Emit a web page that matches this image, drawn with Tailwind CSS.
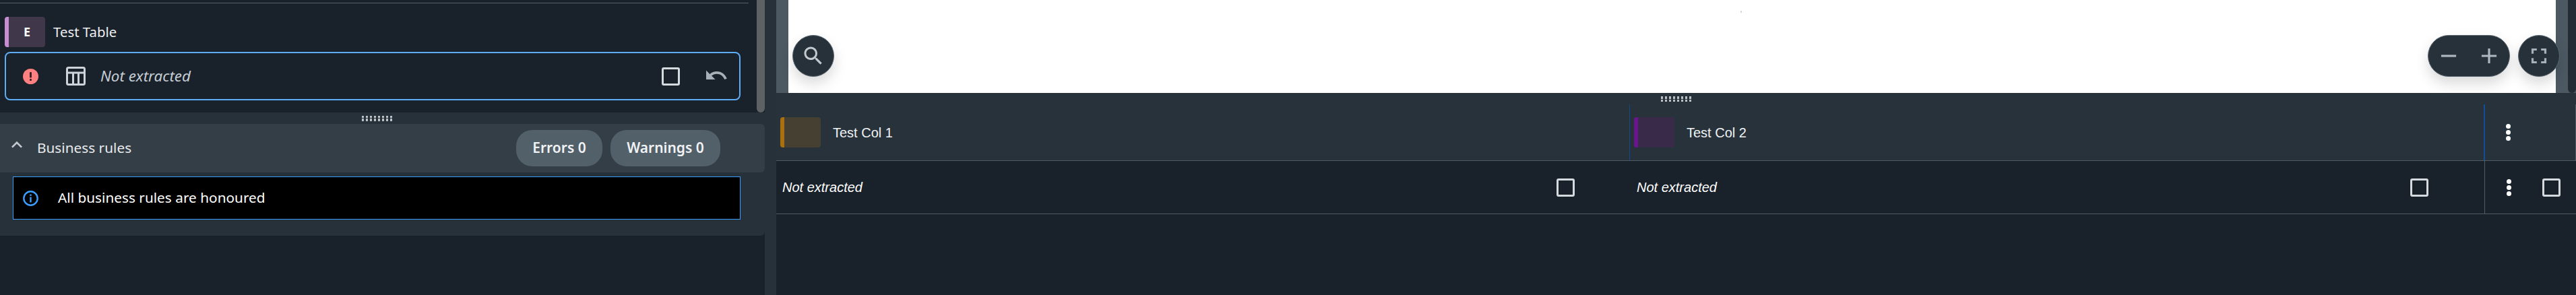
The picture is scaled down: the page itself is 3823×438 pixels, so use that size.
<!DOCTYPE html>
<html>
<head>
    <meta charset="UTF-8">
    <title>Test Table</title>
    <script src="https://cdn.jsdelivr.net/npm/@tailwindcss/browser@4"></script>
</head>
<body class="bg-[#19212a] text-white overflow-hidden">
<div class="flex w-[3823px] h-[438px]">

    <!-- left panel -->
    <div class="w-[1135px] shrink-0 flex flex-col font-['Noto_Sans',sans-serif]">
        <div class="h-[167px] flex bg-[#19212a]">
            <div class="flex-1">
                <div class="h-[25px] pt-[4px] pr-[12px]"><div class="h-px bg-[#55626c]"></div></div>
                <div class="h-[45px] flex items-center gap-[12px] pl-[7px] mb-[7px]">
                    <div class="w-[60px] h-[45px] flex items-center rounded-[4px] overflow-hidden bg-[#40384a] border-l-[6px] border-[#c88cd2]">
                        <span class="w-[54px] text-center text-[18px] font-bold">E</span>
                    </div>
                    <span class="text-[20.4px] leading-none text-[#eceef0]">Test Table</span>
                </div>
                <div class="ml-[7px] w-[1092px] h-[72px] flex items-center border-[2px] border-[#5eabf6] rounded-[8px]">
                    <svg class="ml-[25px] w-[23px] h-[23px]" viewBox="0 0 23 23"><circle cx="11.5" cy="11.5" r="11.5" fill="#ff8080"/><rect x="10" y="5" width="3" height="8.5" rx="1" fill="#3a2428"/><rect x="10" y="15" width="3" height="3" rx="1" fill="#3a2428"/></svg>
                    <svg class="ml-[41px] w-[29px] h-[28px]" viewBox="0 0 29 28" fill="none" stroke="#cdd3d9" stroke-width="3"><rect x="1.5" y="1.5" width="26" height="25" rx="2"/><path d="M1.5 9h26M10.5 9v17M18.5 9v17"/></svg>
                    <span class="ml-[22px] text-[22.4px] italic text-[#c5ccd3]">Not extracted</span>
                    <div class="ml-auto w-[27px] h-[27px] border-[3px] border-[#d5dadf] rounded-[3px]"></div>
                    <svg class="ml-[36px] mr-[16px] w-[36px] h-[36px] mt-[-2px]" viewBox="0 0 24 24" fill="#a7b0b7"><path d="M12.5 8c-2.65 0-5.05.99-6.9 2.6L2 7v9h9l-3.62-3.62c1.39-1.16 3.16-1.88 5.12-1.88 3.54 0 6.55 2.31 7.6 5.5l2.37-.78C21.08 11.03 17.15 8 12.5 8z"/></svg>
                </div>
            </div>
            <div class="w-[12px] bg-[#5f6265] rounded-b-[6px]"></div>
        </div>

        <div class="h-[183px] bg-[#27313a] rounded-br-[6px]">
            <div class="h-[17px] flex items-center pl-[537px]">
                <div class="grid grid-cols-8 gap-x-[2.5px] gap-y-px w-[45px]">
                    <i class="h-[3.5px] bg-[#bcc1c6]"></i><i class="h-[3.5px] bg-[#bcc1c6]"></i><i class="h-[3.5px] bg-[#bcc1c6]"></i><i class="h-[3.5px] bg-[#bcc1c6]"></i><i class="h-[3.5px] bg-[#bcc1c6]"></i><i class="h-[3.5px] bg-[#bcc1c6]"></i><i class="h-[3.5px] bg-[#bcc1c6]"></i><i class="h-[3.5px] bg-[#bcc1c6]"></i>
                    <i class="h-[3.5px] bg-[#bcc1c6]"></i><i class="h-[3.5px] bg-[#bcc1c6]"></i><i class="h-[3.5px] bg-[#bcc1c6]"></i><i class="h-[3.5px] bg-[#bcc1c6]"></i><i class="h-[3.5px] bg-[#bcc1c6]"></i><i class="h-[3.5px] bg-[#bcc1c6]"></i><i class="h-[3.5px] bg-[#bcc1c6]"></i><i class="h-[3.5px] bg-[#bcc1c6]"></i>
                </div>
            </div>
            <div class="h-[72px] flex items-center bg-[#343e47] rounded-r-[6px]">
                <svg class="ml-[9px] w-[32px] h-[32px] mt-[-10px]" viewBox="0 0 24 24" fill="#c4cad0"><path d="M12 8l-6 6 1.41 1.41L12 10.83l4.59 4.58L18 14z"/></svg>
                <span class="ml-[14px] text-[20.8px] text-[#e8eaec]">Business rules</span>
                <span class="ml-auto h-[54px] w-[128px] flex items-center justify-center rounded-[24px] bg-[#52606a] text-[21px] font-semibold text-[#f0f2f4]">Errors 0</span>
                <span class="ml-[12px] mr-[66px] h-[54px] w-[163px] flex items-center justify-center rounded-[24px] bg-[#52606a] text-[21px] font-semibold text-[#f0f2f4]">Warnings 0</span>
            </div>
            <div class="mt-[6px] ml-[19px] w-[1080px] h-[64px] flex items-center bg-black border border-[#3b9eff]">
                <svg class="ml-[14px] w-[23px] h-[23px]" viewBox="0 0 23 23" fill="none"><circle cx="11.5" cy="11.5" r="10.2" stroke="#3b9eff" stroke-width="2.4"/><rect x="10.3" y="9.5" width="2.4" height="8" fill="#3b9eff"/><rect x="10.3" y="5.5" width="2.4" height="2.4" fill="#3b9eff"/></svg>
                <span class="ml-[29px] text-[20.8px] text-white">All business rules are honoured</span>
            </div>
        </div>
    </div>

    <!-- gutter -->
    <div class="w-[17px] shrink-0 bg-[#27313a]"></div>

    <!-- right panel -->
    <div class="w-[2671px] shrink-0 flex flex-col font-['Liberation_Sans',sans-serif]">
        <div class="relative h-[138px] flex">
            <div class="w-[18px] bg-[#4c5963]"></div>
            <div class="flex-1 bg-white"></div>
            <div class="w-[18px] bg-[#4c5963]"></div>
            <div class="w-[12px] bg-[#4c5963]"><div class="h-full bg-[#222c35] rounded-b-[6px]"></div></div>

            <div class="absolute left-[1431px] top-[16px] w-[2px] h-[3px] bg-[#d8d8d8]"></div>

            <button class="absolute left-[24px] top-[52px] w-[62px] h-[62px] flex items-center justify-center rounded-full bg-[#27313a] border border-[#5a6670] shadow-[0_10px_20px_rgba(0,0,0,0.15)]">
                <svg class="w-[36px] h-[36px]" viewBox="0 0 24 24" fill="#c2cad0"><path d="M15.5 14h-.79l-.28-.27C15.41 12.59 16 11.11 16 9.5 16 5.91 13.09 3 9.5 3S3 5.91 3 9.5 5.91 16 9.5 16c1.61 0 3.09-.59 4.23-1.57l.27.28v.79l5 4.99L20.49 19l-4.99-5zm-6 0C7.01 14 5 11.99 5 9.5S7.01 5 9.5 5 14 7.01 14 9.5 11.99 14 9.5 14z"/></svg>
            </button>
            <div class="absolute left-[2451px] top-[52px] w-[122px] h-[62px] flex items-center justify-between px-[11px] rounded-full bg-[#27313a] border border-[#5a6670] shadow-[0_10px_20px_rgba(0,0,0,0.15)]">
                <svg class="w-[38px] h-[38px]" viewBox="0 0 24 24" fill="#b0b8bf"><path d="M19 13H5v-2h14v2z"/></svg>
                <svg class="w-[38px] h-[38px]" viewBox="0 0 24 24" fill="#b0b8bf"><path d="M19 13h-6v6h-2v-6H5v-2h6V5h2v6h6v2z"/></svg>
            </div>
            <button class="absolute left-[2585px] top-[52px] w-[62px] h-[62px] flex items-center justify-center rounded-full bg-[#27313a] border border-[#5a6670] shadow-[0_10px_20px_rgba(0,0,0,0.15)]">
                <svg class="w-[38px] h-[38px]" viewBox="0 0 24 24" fill="#a7b0b7"><path d="M7 14H5v5h5v-2H7v-3zm-2-4h2V7h3V5H5v5zm12 7h-3v2h5v-5h-2v3zM14 5v2h3v3h2V5h-5z"/></svg>
            </button>
        </div>

        <!-- table header -->
        <div class="relative h-[101px] pt-[17px] bg-[#28323b] border-b border-[#4f5c66]">
            <div class="absolute left-[1313px] top-[5px] grid grid-cols-8 gap-x-[2.5px] gap-y-px w-[45px]">
                <i class="h-[3.5px] bg-[#bcc1c6]"></i><i class="h-[3.5px] bg-[#bcc1c6]"></i><i class="h-[3.5px] bg-[#bcc1c6]"></i><i class="h-[3.5px] bg-[#bcc1c6]"></i><i class="h-[3.5px] bg-[#bcc1c6]"></i><i class="h-[3.5px] bg-[#bcc1c6]"></i><i class="h-[3.5px] bg-[#bcc1c6]"></i><i class="h-[3.5px] bg-[#bcc1c6]"></i>
                <i class="h-[3.5px] bg-[#bcc1c6]"></i><i class="h-[3.5px] bg-[#bcc1c6]"></i><i class="h-[3.5px] bg-[#bcc1c6]"></i><i class="h-[3.5px] bg-[#bcc1c6]"></i><i class="h-[3.5px] bg-[#bcc1c6]"></i><i class="h-[3.5px] bg-[#bcc1c6]"></i><i class="h-[3.5px] bg-[#bcc1c6]"></i><i class="h-[3.5px] bg-[#bcc1c6]"></i>
            </div>
            <div class="grid grid-cols-[1266px_1268px_137px] h-[83px]">
                <div class="flex items-center gap-[18px] pl-[6px]">
                    <div class="w-[60px] h-[45px] rounded-[4px] bg-[#454031] border-l-[6px] border-[#aa7010]"></div>
                    <span class="text-[20px] leading-none text-[#f0f3f5]">Test Col 1</span>
                </div>
                <div class="flex items-center gap-[18px] pl-[6px] border-l border-[#0f4a8f]">
                    <div class="w-[60px] h-[45px] rounded-[4px] bg-[#3a2a4a] border-l-[6px] border-[#6a1590]"></div>
                    <span class="text-[20px] leading-none text-[#f0f3f5]">Test Col 2</span>
                </div>
                <div class="flex items-center pl-[31px] border-l-[2px] border-r border-l-[#124f98] border-r-[#4f5c66]">
                    <div class="flex flex-col gap-[2px]"><i class="w-[7px] h-[7px] rounded-full bg-white"></i><i class="w-[7px] h-[7px] rounded-full bg-white"></i><i class="w-[7px] h-[7px] rounded-full bg-white"></i></div>
                </div>
            </div>
        </div>

        <!-- table row -->
        <div class="grid grid-cols-[1266px_1268px_137px] h-[79px] bg-[#19212a] border-b border-[#4f5c66]">
            <div class="flex items-center justify-between pl-[9px] pr-[81px]">
                <span class="text-[20px] italic">Not extracted</span>
                <div class="w-[27px] h-[27px] border-[3px] border-[#d5dadf] rounded-[3px]"></div>
            </div>
            <div class="flex items-center justify-between pl-[11px] pr-[82px]">
                <span class="text-[20px] italic">Not extracted</span>
                <div class="w-[27px] h-[27px] border-[3px] border-[#d5dadf] rounded-[3px]"></div>
            </div>
            <div class="flex items-center justify-between ml-px pl-[32px] pr-[23px] border-l border-[#4f5c66]">
                <div class="flex flex-col gap-[2px]"><i class="w-[7px] h-[7px] rounded-full bg-white"></i><i class="w-[7px] h-[7px] rounded-full bg-white"></i><i class="w-[7px] h-[7px] rounded-full bg-white"></i></div>
                <div class="w-[27px] h-[27px] border-[3px] border-[#d5dadf] rounded-[3px]"></div>
            </div>
        </div>
    </div>
</div>
</body>
</html>
